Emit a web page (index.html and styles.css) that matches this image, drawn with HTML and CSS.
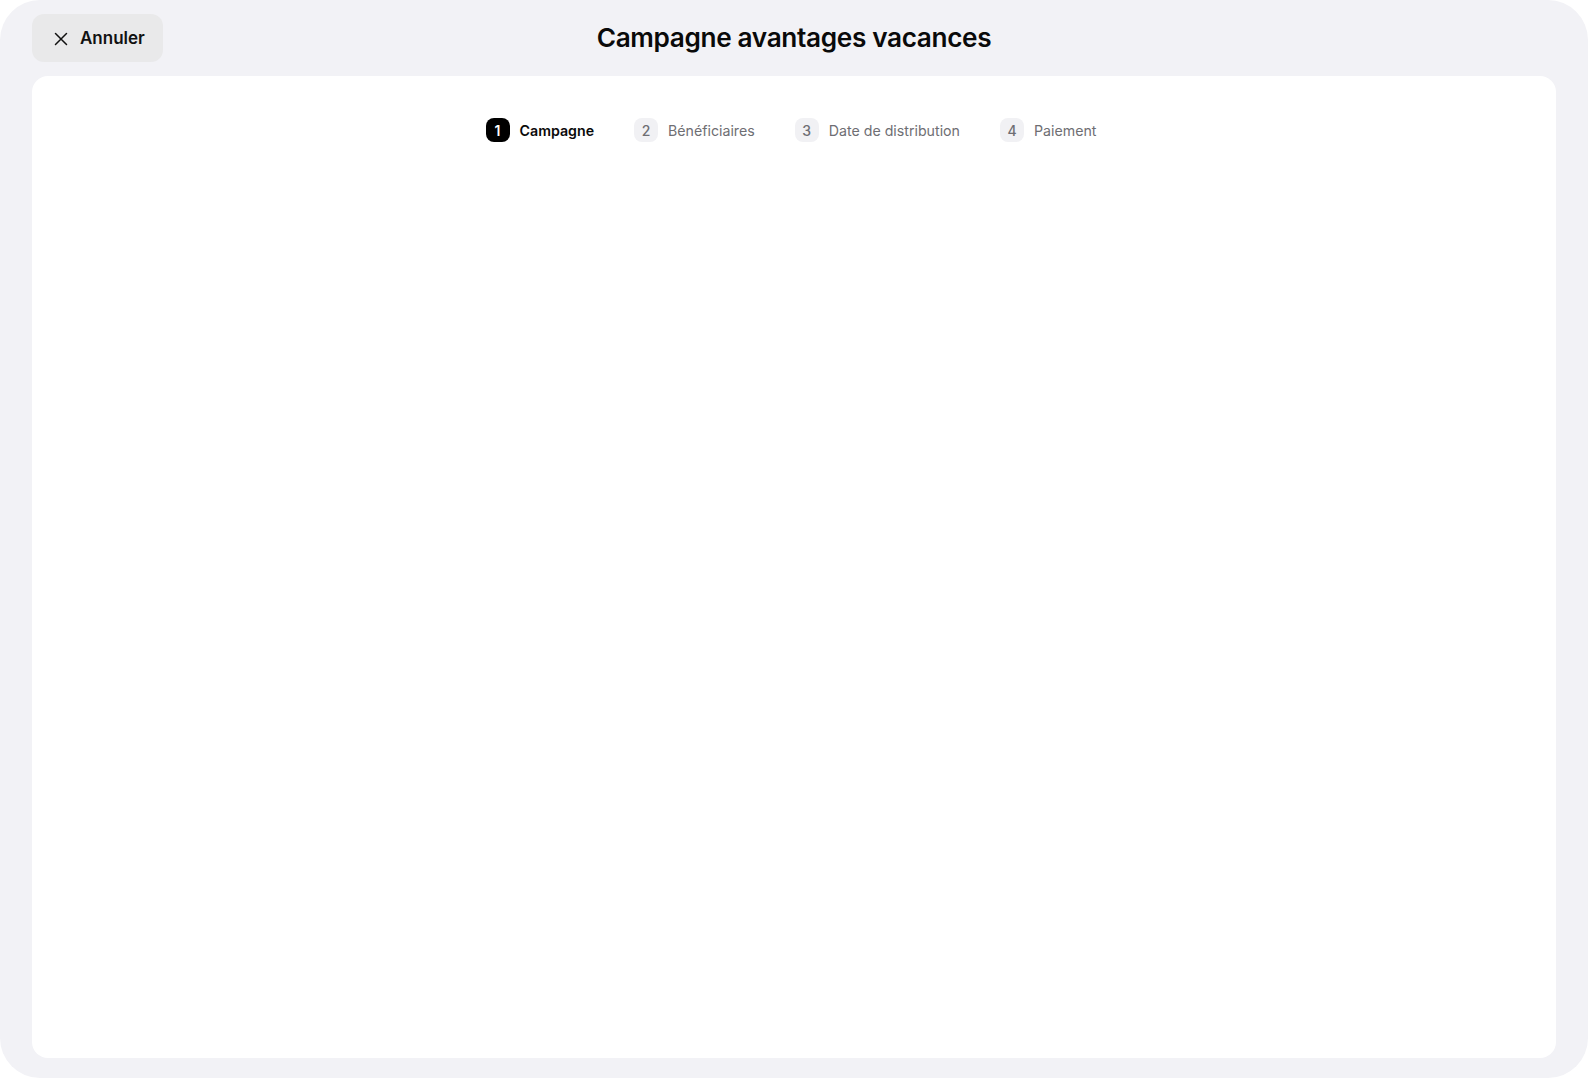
FILE: index.html
```html
<!DOCTYPE html>
<html lang="fr">
<head>
<meta charset="utf-8">
<title>Campagne avantages vacances</title>
<link rel="stylesheet" href="styles.css">
</head>
<body>
<div class="frame">
  <header class="topbar">
    <button class="cancel" type="button">
      <svg class="cancel-icon" width="14" height="14" viewBox="0 0 14 14" aria-hidden="true"><path d="M1.5 1.5 L12.5 12.5 M12.5 1.5 L1.5 12.5" stroke="#111" stroke-width="1.5" stroke-linecap="round" fill="none"/></svg>
      <span>Annuler</span>
    </button>
    <h1 class="title">Campagne avantages vacances</h1>
    <div class="spacer"></div>
  </header>
  <main class="card">
    <ol class="steps">
      <li class="step active"><span class="badge">1</span><span class="label">Campagne</span></li>
      <li class="step"><span class="badge">2</span><span class="label">Bénéficiaires</span></li>
      <li class="step"><span class="badge">3</span><span class="label">Date de distribution</span></li>
      <li class="step"><span class="badge">4</span><span class="label">Paiement</span></li>
    </ol>
  </main>
</div>
</body>
</html>
```

FILE: styles.css
```css
* { box-sizing: border-box; }
html, body { margin: 0; padding: 0; background: #ffffff; }
body { font-family: Inter, "Noto Sans", "Liberation Sans", sans-serif; color: #0d0d0d; }

.frame {
  height: 1078px;
  background: #f2f2f6;
  border-radius: 40px;
  padding: 14px 32px 20px;
  display: flex;
  flex-direction: column;
  gap: 14px;
}

.topbar {
  height: 48px;
  display: grid;
  grid-template-columns: 1fr auto 1fr;
  align-items: center;
}

.cancel {
  justify-self: start;
  height: 48px;
  width: 131px;
  border: none;
  border-radius: 12px;
  background: #e9e9ea;
  display: flex;
  align-items: center;
  gap: 12px;
  padding: 0 0 0 22px;
  font-family: inherit;
  font-size: 17px;
  font-weight: 600;
  color: #111;
  cursor: pointer;
}
.cancel-icon { display: block; margin-top: 1px; }

.title {
  margin: 0;
  font-size: 26.2px;
  font-weight: 600;
  letter-spacing: -0.35px;
  color: #0a0a0a;
  line-height: 1;
}

.card {
  flex: 1;
  background: #ffffff;
  border-radius: 16px;
  padding-top: 42px;
}

.steps {
  list-style: none;
  margin: 0;
  padding: 0;
  display: flex;
  justify-content: center;
  gap: 40px;
  margin-left: -6px;
}

.step {
  display: flex;
  align-items: center;
  gap: 10px;
  font-size: 14.2px;
  color: #6e6e73;
}

.badge {
  width: 24px;
  height: 24px;
  border-radius: 8px;
  background: #f1f1f4;
  display: flex;
  align-items: center;
  justify-content: center;
  font-size: 14px;
  font-weight: 500;
  color: #6e6e73;
}

.step.active { color: #0a0a0a; font-weight: 600; }
.step.active .badge { background: #000; color: #fff; font-weight: 600; }
```
